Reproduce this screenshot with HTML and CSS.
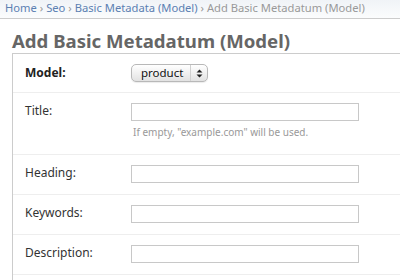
FILE: index.html
```html
<!DOCTYPE html>
<html lang="en">
<head>
  <meta charset="UTF-8">
  <title>Add Basic Metadatum (Model)</title>
  <link rel="stylesheet" href="styles.css">
</head>
<body>
  <div class="breadcrumbs">
    <a href="#">Home</a> &rsaquo; <a href="#">Seo</a> &rsaquo; <a href="#">Basic Metadata (Model)</a> &rsaquo; Add Basic Metadatum (Model)
  </div>

  <div class="content">
    <h1>Add Basic Metadatum (Model)</h1>

    <fieldset class="module">
      <div class="form-row first">
        <label class="required" for="id_model">Model:</label>
        <span class="select" id="id_model">
          <span class="select-value">product</span>
          <span class="select-arrows">
            <svg width="7" height="9" viewBox="0 0 7 9"><path d="M3.5 0.5 L6.5 3.5 L0.5 3.5 Z M3.5 8.5 L6.5 5.5 L0.5 5.5 Z" fill="#222"/></svg>
          </span>
        </span>
      </div>
      <div class="form-row">
        <label for="id_title">Title:</label>
        <div class="field">
          <input type="text" id="id_title" class="text">
          <p class="help">If empty, "example.com" will be used.</p>
        </div>
      </div>
      <div class="form-row">
        <label for="id_heading">Heading:</label>
        <input type="text" id="id_heading" class="text">
      </div>
      <div class="form-row">
        <label for="id_keywords">Keywords:</label>
        <input type="text" id="id_keywords" class="text">
      </div>
      <div class="form-row">
        <label for="id_description">Description:</label>
        <input type="text" id="id_description" class="text">
      </div>
      <div class="form-row">
        <label for="id_extra">&nbsp;</label>
      </div>
    </fieldset>
  </div>
</body>
</html>
```

FILE: styles.css
```css
html {
  overflow: hidden;
}
body {
  margin: 0;
  font-family: "Noto Sans", "DejaVu Sans", sans-serif;
  font-size: 12px;
  color: #333;
  background: #fff;
}
a {
  color: #5b80b2;
  text-decoration: none;
}
.breadcrumbs {
  padding: 0 5px 3px;
  line-height: 15px;
  font-size: 11.2px;
  color: #999;
  white-space: nowrap;
  background: linear-gradient(#f0f3f7, #fbfcfd);
  border-bottom: 1px solid #ccc;
}
.content {
  padding: 0 0 0 12px;
}
h1 {
  margin: 10px 0 0;
  font-size: 18.6px;
  line-height: 24px;
  font-weight: bold;
  color: #666;
  white-space: nowrap;
}
.module {
  box-sizing: border-box;
  width: 388px;
  margin: 0;
  padding: 0;
  border: 1px solid #ccc;
  border-right: none;
}
.form-row {
  display: flex;
  align-items: flex-start;
  padding: 10px 12px 11px;
  border-bottom: 1px solid #eee;
}
.form-row.first {
  padding-bottom: 10px;
}
.form-row label {
  width: 106px;
  flex-shrink: 0;
  line-height: 16px;
  color: #333;
}
.form-row label.required {
  font-weight: bold;
  color: #222;
  line-height: 18px;
}
input.text {
  box-sizing: border-box;
  width: 228px;
  height: 18px;
  margin: 0;
  border: 1px solid #c8c8c8;
  padding: 0 3px;
  font: inherit;
}
.help {
  margin: 4px 0 4px 2px;
  font-size: 10px;
  line-height: 14px;
  color: #999;
}
.select {
  box-sizing: border-box;
  display: flex;
  align-items: center;
  width: 77px;
  height: 18px;
  border: 1px solid #b8b8b8;
  border-radius: 5px;
  background: linear-gradient(#ffffff, #f1f1f1 50%, #e2e2e2);
  box-shadow: 0 1px 1px rgba(0, 0, 0, 0.08);
}
.select-value {
  flex: 1;
  padding-left: 9px;
  font-size: 11.5px;
  line-height: 16px;
  color: #111;
}
.select-arrows {
  display: flex;
  align-items: center;
  justify-content: center;
  width: 16px;
  height: 16px;
  border-left: 1px solid #d0d0d0;
}
```
